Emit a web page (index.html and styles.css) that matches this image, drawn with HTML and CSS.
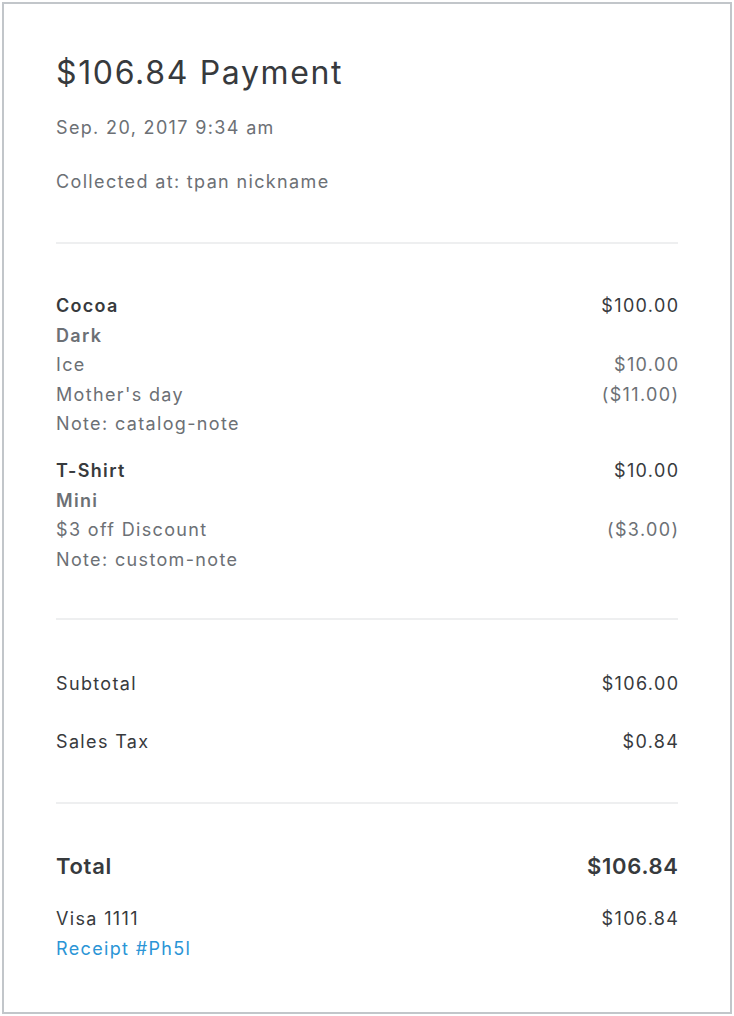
FILE: index.html
```html
<!DOCTYPE html>
<html>
<head>
<meta charset="utf-8">
<link rel="stylesheet" href="styles.css">
</head>
<body>
<div class="card">
  <section class="head">
    <h1 class="title">$106.84 Payment</h1>
    <div class="date">Sep. 20, 2017 9:34 am</div>
    <div class="collected">Collected at: tpan nickname</div>
  </section>
  <section class="items">
    <div class="item">
      <div class="row"><span class="name">Cocoa</span><span class="amt">$100.00</span></div>
      <div class="row"><span class="variant">Dark</span></div>
      <div class="row muted"><span>Ice</span><span class="amt">$10.00</span></div>
      <div class="row muted"><span>Mother's day</span><span class="amt">($11.00)</span></div>
      <div class="row muted"><span>Note: catalog-note</span></div>
    </div>
    <div class="item">
      <div class="row"><span class="name">T-Shirt</span><span class="amt">$10.00</span></div>
      <div class="row"><span class="variant">Mini</span></div>
      <div class="row muted"><span>$3 off Discount</span><span class="amt">($3.00)</span></div>
      <div class="row muted"><span>Note: custom-note</span></div>
    </div>
  </section>
  <section class="sums">
    <div class="row"><span>Subtotal</span><span class="amt">$106.00</span></div>
    <div class="row"><span>Sales Tax</span><span class="amt">$0.84</span></div>
  </section>
  <section class="totals">
    <div class="row total"><span>Total</span><span class="amt">$106.84</span></div>
    <div class="tender">
      <div class="row"><span>Visa 1111</span><span class="amt">$106.84</span></div>
      <div class="row"><a class="link" href="#">Receipt #Ph5l</a></div>
    </div>
  </section>
</div>
</body>
</html>
```
FILE: styles.css
```css
html, body {
  margin: 0;
  padding: 0;
  background: #ffffff;
}
body {
  padding: 2px;
  font-family: "Inter", "Open Sans", "Liberation Sans", sans-serif;
  color: #373a3d;
}
.card {
  box-sizing: border-box;
  width: 730px;
  height: 1012px;
  border: 2px solid #c2c6ca;
  padding: 49px 52px 0;
}
.title {
  margin: 0;
  font-size: 32px;
  line-height: 40px;
  font-weight: 400;
  letter-spacing: 1.65px;
  color: #373a3d;
}
.date, .collected {
  font-size: 18px;
  line-height: 30px;
  letter-spacing: 1.35px;
  color: #6c7075;
}
.date { margin-top: 20px; }
.collected { margin-top: 24px; }
.head {
  padding-bottom: 45px;
  border-bottom: 2px solid #eeeff0;
}
.items {
  padding: 47px 0 44px;
  border-bottom: 2px solid #eeeff0;
  display: flex;
  flex-direction: column;
  gap: 17px;
}
.row {
  display: flex;
  justify-content: space-between;
  font-size: 18px;
  line-height: 29.6px;
  letter-spacing: 1.35px;
}
.amt { margin-right: -1.35px; }
.name { font-weight: 600; color: #373a3d; letter-spacing: 1.3px; }
.variant { font-weight: 600; color: #6c7075; letter-spacing: 1.3px; }
.muted { color: #6c7075; }
.sums {
  padding: 49px 0 45px;
  border-bottom: 2px solid #eeeff0;
  display: flex;
  flex-direction: column;
  gap: 28px;
}
.sums .row { line-height: 30px; }
.totals {
  padding-top: 47px;
  display: flex;
  flex-direction: column;
  gap: 23px;
}
.total {
  font-size: 22px;
  line-height: 30px;
  font-weight: 600;
  letter-spacing: 0.7px;
}
.total .amt { margin-right: -0.7px; }
.tender .row { line-height: 30px; }
.link {
  color: #2b95d6;
  text-decoration: none;
}
```
